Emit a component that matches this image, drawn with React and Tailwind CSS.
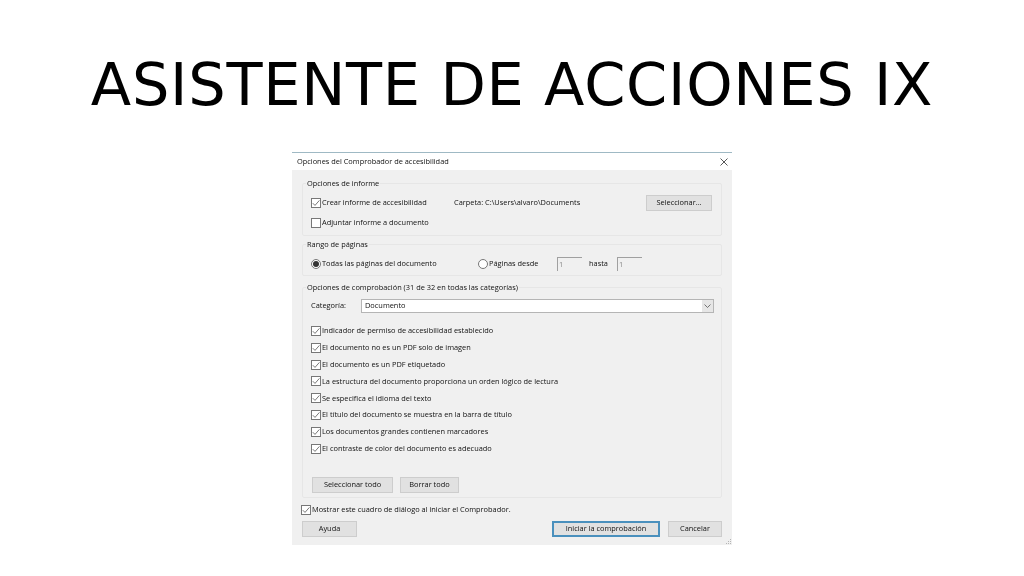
const Check = ({ checked = true }) => (
  <span className="w-[10px] h-[10px] border border-[#777] bg-white flex items-center justify-center shrink-0">
    {checked && (
      <svg width="8" height="8" viewBox="0 0 8 8" fill="none">
        <path d="M0.8 4.2 L3 6.4 L7.4 1.4" stroke="#555" strokeWidth="0.8" />
      </svg>
    )}
  </span>
)

const Radio = ({ checked }) => (
  <span className="w-[10px] h-[10px] rounded-full border border-[#777] bg-white flex items-center justify-center shrink-0">
    {checked && <span className="w-[6px] h-[6px] rounded-full bg-[#333]"></span>}
  </span>
)

const CheckRow = ({ label, checked = true, className = '' }) => (
  <div className={`flex items-center gap-[1px] h-[10px] ${className}`}>
    <Check checked={checked} />
    <span className="whitespace-nowrap">{label}</span>
  </div>
)

const Btn = ({ children, primary = false, className = '' }) => (
  <div className={`h-[16px] bg-[#e1e1e1] flex items-center justify-center ${primary ? 'border-2 border-[#4a90bd]' : 'border border-[#cdcdcd]'} ${className}`}>
    {children}
  </div>
)

const Group = ({ title, className = '', children }) => (
  <fieldset className={`border border-[#e6e6e6] rounded-[2px] mx-[10px] ${className}`}>
    <legend className="ml-[3px] px-[1px] leading-[10px] whitespace-nowrap">{title}</legend>
    {children}
  </fieldset>
)

const Field = () => (
  <div className="w-[25px] h-[14px] border-t border-l border-[#a0a0a0] bg-[#f0f0f0] text-[#888] pl-[1px] leading-[13px]">1</div>
)

const items = [
  'Indicador de permiso de accesibilidad establecido',
  'El documento no es un PDF solo de imagen',
  'El documento es un PDF etiquetado',
  'La estructura del documento proporciona un orden lógico de lectura',
  'Se especifica el idioma del texto',
  'El título del documento se muestra en la barra de título',
  'Los documentos grandes contienen marcadores',
  'El contraste de color del documento es adecuado',
]

export default function App() {
  return (
    <div className="w-[1024px] h-[576px] bg-white overflow-hidden flex flex-col items-center">
      <h1 className="mt-[46px] h-[106px] text-[59px] leading-[78px] tracking-[0.74px] text-black whitespace-nowrap font-normal [font-family:'DejaVu_Sans',sans-serif]">
        ASISTENTE DE ACCIONES IX
      </h1>

      <div className="w-[440px] h-[393px] flex flex-col border-t border-[#9fb9c4] text-[7.4px] text-[#111] [font-family:'Open_Sans',sans-serif] blur-[0.3px]">
        <div className="h-[17px] bg-white flex items-center justify-between pl-[5px] pr-[4px] shrink-0">
          <span>Opciones del Comprobador de accesibilidad</span>
          <svg width="8" height="8" viewBox="0 0 8 8" stroke="#444" strokeWidth="0.9" fill="none">
            <path d="M0.5 0.5 L7.5 7.5 M7.5 0.5 L0.5 7.5" />
          </svg>
        </div>

        <div className="flex-1 bg-[#f0f0f0] pt-[8px] flex flex-col relative">
          <Group title="Opciones de informe" className="h-[58px]">
            <div className="flex items-center pl-[8px] pt-[5px] h-[24px]">
              <CheckRow label="Crear informe de accesibilidad" className="w-[143px]" />
              <span className="whitespace-nowrap">Carpeta: C:\Users\alvaro\Documents</span>
              <Btn className="w-[66px] ml-auto mr-[9px]">Seleccionar...</Btn>
            </div>
            <CheckRow label="Adjuntar informe a documento" checked={false} className="ml-[8px] mt-[6px]" />
          </Group>

          <Group title="Rango de páginas" className="h-[37px] mt-[3px]">
            <div className="flex items-center pl-[8px] h-[14px] mt-[8px]">
              <div className="flex items-center gap-[1px] w-[167px]">
                <Radio checked />
                <span>Todas las páginas del documento</span>
              </div>
              <div className="flex items-center gap-[1px] w-[79px]">
                <Radio />
                <span>Páginas desde</span>
              </div>
              <Field />
              <span className="ml-[7px] w-[28px]">hasta</span>
              <Field />
            </div>
          </Group>

          <Group title="Opciones de comprobación (31 de 32 en todas las categorías)" className="h-[216px] mt-[6px]">
            <div className="flex items-center pl-[8px] h-[14px] mt-[7px]">
              <span className="w-[50px]">Categoría:</span>
              <div className="w-[353px] h-[14px] bg-white border border-[#b5b5b5] flex items-center justify-between pl-[3px]">
                <span>Documento</span>
                <span className="w-[11px] h-[12px] bg-[#e6e6e6] flex items-center justify-center">
                  <svg width="7" height="4" viewBox="0 0 7 4" fill="none" stroke="#555" strokeWidth="0.8">
                    <path d="M0.5 0.5 L3.5 3.5 L6.5 0.5" />
                  </svg>
                </span>
              </div>
            </div>
            <div className="flex flex-col gap-[6.8px] pl-[8px] mt-[13px]">
              {items.map((item) => (
                <CheckRow key={item} label={item} />
              ))}
            </div>
            <div className="flex gap-[7px] pl-[9px] mt-[23px]">
              <Btn className="w-[81px]">Seleccionar todo</Btn>
              <Btn className="w-[59px]">Borrar todo</Btn>
            </div>
          </Group>

          <CheckRow label="Mostrar este cuadro de diálogo al iniciar el Comprobador." className="ml-[9px] mt-[7px]" />

          <div className="flex items-center mt-[6px] px-[10px]">
            <Btn className="w-[55px]">Ayuda</Btn>
            <Btn primary className="w-[108px] ml-auto">Iniciar la comprobación</Btn>
            <Btn className="w-[54px] ml-[8px]">Cancelar</Btn>
          </div>

          <svg className="absolute right-0 bottom-0" width="7" height="7" viewBox="0 0 7 7" fill="#b5b5b5">
            <rect x="5" y="1" width="1" height="1" />
            <rect x="3" y="3" width="1" height="1" />
            <rect x="5" y="3" width="1" height="1" />
            <rect x="1" y="5" width="1" height="1" />
            <rect x="3" y="5" width="1" height="1" />
            <rect x="5" y="5" width="1" height="1" />
          </svg>
        </div>
      </div>
    </div>
  )
}
